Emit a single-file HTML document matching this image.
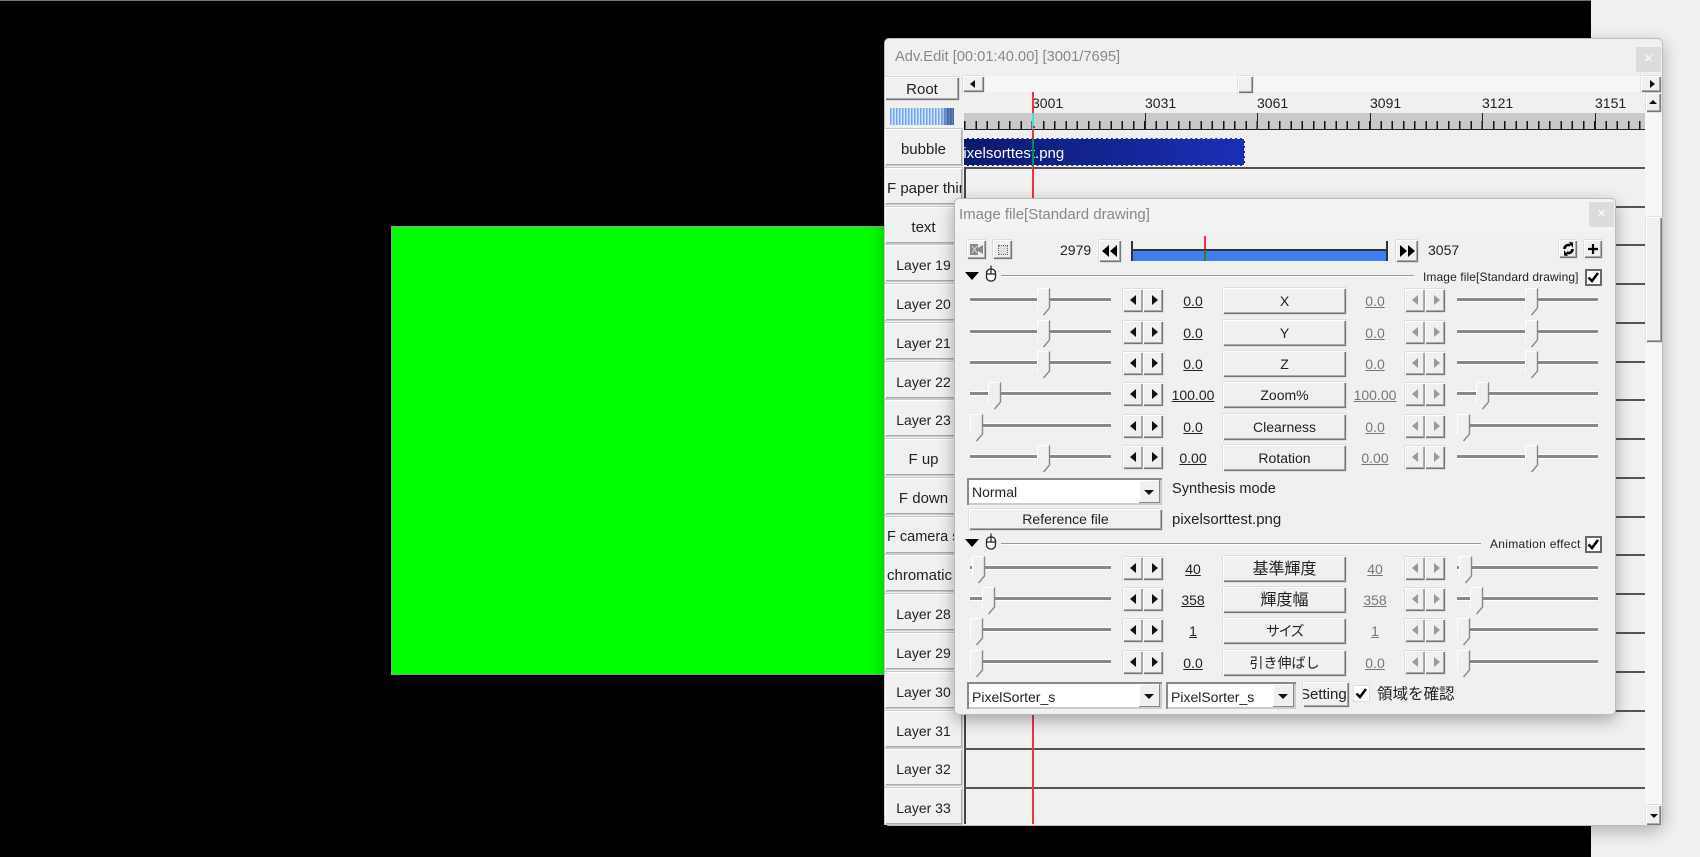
<!DOCTYPE html>
<html><head><meta charset="utf-8"><title>Adv.Edit</title>
<style>
html,body{margin:0;padding:0;background:#000}
#p{position:relative;width:1700px;height:857px;overflow:hidden;background:#000;font:14px "Liberation Sans","Noto Sans CJK JP",sans-serif;color:#222;filter:blur(.3px)}
#p *{box-sizing:border-box}
.abs,#p i,#p b,#p u,#p span,#p svg{position:absolute;display:block}
#p i,#p b,#p u{font-style:normal;font-weight:normal}
.btn,.b,.lb,.a{background:#f0f0f0;box-shadow:inset 1px 1px 0 #fff,inset -1px -1px 0 #777,inset -2px -2px 0 #aaa,0 0 0 .5px #ccc}
.lb{left:885px;width:77px;height:36px;line-height:41px;text-align:center;overflow:hidden;white-space:nowrap;box-shadow:inset 1px 1px 0 #fff,inset -1px -1px 0 #aaa,0 0 0 1px #c8c8c8}
.w{font-size:15px}
.tr{left:964px;width:681px;height:39px;border-top:2px solid #555;border-left:2px solid #444}
.rl{top:102px;left:0;height:16px;line-height:16px;font-size:14px;transform:translateY(-8px)}
.mj{top:113px;width:1.4px;height:16px;background:#222}
.r{left:0;width:1700px;height:30px;position:absolute}
.t{height:3px;top:10px;width:141px;background:#888;box-shadow:0 1px 0 #fff,0 -1px 0 #fff}
.t1{left:970px}.t2{left:1457px}
.h{top:0;width:14px;height:28px}
.a{width:20px;height:23px;top:1px}
.a1{left:1123px}.a2{left:1143px}.a3{left:1405px}.a4{left:1425px}
.a::after{content:"";position:absolute;top:6px;border:5px solid transparent;border-width:5px 6px}
.a1::after,.a3::after{left:1px;border-right-color:#111}
.a2::after,.a4::after{left:9px;border-left-color:#111}
.a3::after{border-right-color:#999}.a4::after{border-left-color:#999}
.v{top:4px;width:60px;text-align:center;line-height:18px;text-decoration:underline}
.v1{left:1163px}.v2{left:1345px;color:#777}
.b{left:1223px;top:0;width:123px;height:26px;line-height:27px;text-align:center;white-space:nowrap}
.j{font-size:16px}
.cb{height:27px;background:#fff;box-shadow:inset 0 0 0 2px #8c8c8c;box-shadow:inset 2px 2px 0 #8a8a8a,inset -2px -2px 0 #ccc}
.dd{width:21px;height:23px;top:2px;background:#f0f0f0;box-shadow:inset -1px -1px 0 #888,inset 1px 1px 0 #fff}
.dd::after{content:"";position:absolute;left:5px;top:10px;border:5px solid transparent;border-bottom:0;border-top:5px solid #111}
.tx{white-space:nowrap;line-height:18px}
.ck{width:17px;height:17px;background:#fff;box-shadow:inset 0 0 0 2px #666}
</style></head><body>
<div id="p">
<svg width="0" height="0" style="position:absolute"><defs>
<g id="h"><polygon points=".5,.5 12.5,.5 12.5,20 6.5,27 .5,21" fill="#f0f0f0"/><polyline points=".5,21 .5,.5 12,.5" fill="none" stroke="#fff"/><polyline points="12.5,.5 12.5,20 6.5,27" fill="none" stroke="#888" stroke-width="1.4"/></g>
<g id="m"><rect x="1.5" y="4" width="9" height="12" rx="4" fill="#fff" stroke="#222" stroke-width="1.3"/><path d="M1.5 9H10.5M6 4V9M6 4V.5" fill="none" stroke="#222" stroke-width="1.2"/></g>
<path id="c" d="M3.5 8.5L7 12L13 4" fill="none" stroke="#000" stroke-width="2.6"/>
</defs></svg>

<!-- top line + right panel -->
<div class="abs" style="position:absolute;left:0;top:0;width:1591px;height:1px;background:#777"></div>
<div style="position:absolute;left:1591px;top:0;width:109px;height:857px;background:#f1f1f1"></div>
<div style="position:absolute;left:391px;top:226px;width:500px;height:449px;background:#0f0;border:1px solid #999"></div>

<!-- main window -->
<div style="position:absolute;left:884px;top:38px;width:779px;height:788px;background:#f0f0f0;border-radius:5px;border:1px solid #bbb;box-shadow:0 5px 18px rgba(0,0,0,.28)"></div>
<div class="tx" style="position:absolute;left:895px;top:48px;color:#888;font-size:14.7px">Adv.Edit [00:01:40.00] [3001/7695]</div>
<div style="position:absolute;left:1636px;top:47px;width:25px;height:25px;background:#dcdcdc;color:#fff;text-align:center;line-height:24px;font-size:15px">×</div>
<div style="position:absolute;left:963px;top:76px;width:678px;height:16px;background:#f7f7f7"></div>
<i class="btn w" style="left:885px;top:77px;width:74px;height:23px;line-height:25px;text-align:center">Root</i>
<i class="btn" style="left:963px;top:76px;width:21px;height:16px"></i>
<span style="left:970px;top:80px;width:0;height:0;border:4px solid transparent;border-right:5px solid #111;border-left:0"></span>
<i class="btn" style="left:1238px;top:76px;width:15px;height:17px"></i>
<i class="btn" style="left:1641px;top:76px;width:20px;height:16px"></i>
<span style="left:1650px;top:80px;width:0;height:0;border:4px solid transparent;border-left:5px solid #111;border-right:0"></span>

<!-- scrollbar -->
<div style="position:absolute;left:1645px;top:93px;width:17px;height:732px;background:#f7f7f7"></div>
<i class="btn" style="left:1646px;top:93px;width:15px;height:19px"></i>
<span style="left:1649px;top:100px;width:0;height:0;border:4px solid transparent;border-top:0;border-bottom:4px solid #111"></span>
<i class="btn" style="left:1646px;top:217px;width:16px;height:125px"></i>
<i class="btn" style="left:1646px;top:805px;width:15px;height:20px"></i>
<span style="left:1650px;top:814px;width:0;height:0;border:4px solid transparent;border-bottom:0;border-top:4px solid #111"></span>

<!-- meter -->
<div style="position:absolute;left:890px;top:108px;width:64px;height:17px;background:linear-gradient(90deg,transparent 0,transparent 80%,rgba(30,60,130,.6) 90%),repeating-linear-gradient(90deg,#6ea6ee 0 1.5px,#d5e3f8 1.5px 3px)"></div>

<!-- ruler -->
<div style="position:absolute;left:964px;top:113px;width:681px;height:17px;background:#c9c9c9;border-bottom:1.5px solid #222"></div>
<div style="position:absolute;left:964px;top:121px;width:681px;height:8px;background:repeating-linear-gradient(90deg,transparent 0 .1px,#111 .1px 1.6px,transparent 1.6px 11.25px)"></div>
<i class="mj" style="left:1032px"></i><i class="mj" style="left:1144.6px"></i><i class="mj" style="left:1257px"></i><i class="mj" style="left:1369.6px"></i><i class="mj" style="left:1482px"></i><i class="mj" style="left:1594.6px"></i>
<i class="rl tx" style="left:1032px">3001</i>
<i class="rl tx" style="left:1145px">3031</i>
<i class="rl tx" style="left:1257px">3061</i>
<i class="rl tx" style="left:1370px">3091</i>
<i class="rl tx" style="left:1482px">3121</i>
<i class="rl tx" style="left:1595px">3151</i>

<!-- labels -->
<i class="lb w" style="top:129px">bubble</i>
<i class="lb w" style="top:168px;text-align:left;padding-left:2px">F paper thin</i>
<i class="lb w" style="top:207px">text</i>
<i class="lb" style="top:245px">Layer 19</i>
<i class="lb" style="top:284px">Layer 20</i>
<i class="lb" style="top:323px">Layer 21</i>
<i class="lb" style="top:362px">Layer 22</i>
<i class="lb" style="top:400px">Layer 23</i>
<i class="lb w" style="top:439px">F up</i>
<i class="lb w" style="top:478px">F down</i>
<i class="lb" style="top:517px;text-align:left;padding-left:2px;font-size:14.5px">F camera s</i>
<i class="lb w" style="top:555px;text-align:left;padding-left:2px">chromatic</i>
<i class="lb" style="top:594px">Layer 28</i>
<i class="lb" style="top:633px">Layer 29</i>
<i class="lb" style="top:672px">Layer 30</i>
<i class="lb" style="top:711px">Layer 31</i>
<i class="lb" style="top:749px">Layer 32</i>
<i class="lb" style="top:788px">Layer 33</i>

<!-- tracks -->
<i class="tr" style="top:167px"></i><i class="tr" style="top:206px"></i><i class="tr" style="top:244px"></i>
<i class="tr" style="top:283px"></i><i class="tr" style="top:322px"></i><i class="tr" style="top:361px"></i>
<i class="tr" style="top:399px"></i><i class="tr" style="top:438px"></i><i class="tr" style="top:477px"></i>
<i class="tr" style="top:516px"></i><i class="tr" style="top:554px"></i><i class="tr" style="top:593px"></i>
<i class="tr" style="top:632px"></i><i class="tr" style="top:671px"></i><i class="tr" style="top:710px"></i>
<i class="tr" style="top:748px"></i><i class="tr" style="top:787px;height:37px"></i>

<!-- object -->
<div style="position:absolute;left:964px;top:138px;width:281px;height:28px;background:linear-gradient(90deg,#0c1a6c,#1a2fb8);border:1.5px dashed #fff;border-left:0;overflow:hidden;color:#fff;font-size:15px;line-height:29px;white-space:nowrap;text-indent:-9px">pixelsorttest.png</div>

<!-- playhead -->
<div style="position:absolute;left:1032px;top:92px;width:1.5px;height:732px;background:#f0343c"></div>
<div style="position:absolute;left:1032px;top:113px;width:1.5px;height:16px;background:#3fe0e8"></div>
<div style="position:absolute;left:1033px;top:126px;width:2px;height:2px;background:#e02020"></div>
<div style="position:absolute;left:1032px;top:138px;width:1.5px;height:28px;background:#0a8a5a"></div>

<!-- dialog -->
<div style="position:absolute;left:954px;top:198px;width:662px;height:517px;background:#f0f0f0;border:1px solid #bbb;border-radius:5px;box-shadow:0 5px 16px rgba(0,0,0,.32)"></div>
<div style="position:absolute;left:955px;top:199px;width:660px;height:33px;background:#f3f3f3;border-radius:5px 5px 0 0"></div>
<div class="tx" style="position:absolute;left:959px;top:206px;color:#888;font-size:15px">Image file[Standard drawing]</div>
<div style="position:absolute;left:1589px;top:202px;width:25px;height:25px;background:#dcdcdc;color:#fff;text-align:center;line-height:24px;font-size:15px">×</div>

<!-- top strip -->
<i class="btn" style="left:967px;top:240px;width:19px;height:19px"></i>
<svg style="left:969px;top:243px" width="15" height="13"><path d="M1 1H9V5L14 2V11L9 8V12H1Z" fill="#888"/><path d="M3 3L8 10M8 3L3 10" stroke="#ddd" stroke-width="1"/></svg>
<i class="btn" style="left:993px;top:240px;width:19px;height:19px"></i>
<div style="position:absolute;left:998px;top:245px;width:10px;height:10px;border:1px dotted #666;background:#ddd"></div>
<i class="tx" style="left:1060px;top:241px">2979</i>
<i class="btn" style="left:1099px;top:240px;width:22px;height:22px"></i>
<svg style="left:1101px;top:244px" width="18" height="14"><path d="M1 7L8 1V13ZM9 7L16 1V13Z" fill="#000"/></svg>
<div style="position:absolute;left:1132px;top:249px;width:255px;height:12px;background:#3f7ff2;border-top:2px solid #333"></div>
<div style="position:absolute;left:1131px;top:241px;width:2px;height:20px;background:#333"></div>
<div style="position:absolute;left:1386px;top:241px;width:2px;height:20px;background:#333"></div>
<div style="position:absolute;left:1204px;top:236px;width:1.5px;height:13px;background:#f0343c"></div>
<div style="position:absolute;left:1204px;top:250px;width:1.5px;height:11px;background:#3a7a20"></div>
<i class="btn" style="left:1396px;top:240px;width:22px;height:22px"></i>
<svg style="left:1399px;top:244px" width="18" height="14"><path d="M1 1L8 7L1 13ZM9 1L16 7L9 13Z" fill="#000"/></svg>
<i class="tx" style="left:1428px;top:241px">3057</i>
<i class="btn" style="left:1559px;top:240px;width:18px;height:18px"></i>
<svg style="left:1562px;top:242px" width="13" height="14"><path d="M2.5 7A4 4 0 0 1 8.5 3.5M10.5 7A4 4 0 0 1 4.5 10.5" fill="none" stroke="#000" stroke-width="2.6"/><path d="M7 0L11 0.5V6ZM6 14L2 13.5V8Z" fill="#000"/></svg>
<i class="btn" style="left:1584px;top:240px;width:18px;height:18px"></i>
<svg style="left:1587px;top:243px" width="12" height="12"><path d="M6 1V11M1 6H11" stroke="#000" stroke-width="2.2"/></svg>

<!-- section 1 -->
<svg style="left:965px;top:272px" width="15" height="9"><path d="M0 0H14L7 8Z" fill="#000"/></svg>
<svg style="left:985px;top:265px" width="12" height="18"><use href="#m"/></svg>
<div style="position:absolute;left:1001px;top:275px;width:413px;height:1px;background:#999;box-shadow:0 1px 0 #fff"></div>
<i class="tx" style="left:1423px;top:268px;font-size:12px;letter-spacing:.1px">Image file[Standard drawing]</i>
<i class="ck" style="left:1585px;top:269px"></i>
<svg style="left:1585px;top:269px" width="17" height="17"><use href="#c"/></svg>

<div class="r" style="top:288px"><i class="t t1"></i><svg class="h" style="left:1037px"><use href="#h"/></svg><i class="a a1"></i><i class="a a2"></i><u class="v v1">0.0</u><b class="b">X</b><u class="v v2">0.0</u><i class="a a3"></i><i class="a a4"></i><i class="t t2"></i><svg class="h" style="left:1525px"><use href="#h"/></svg></div>
<div class="r" style="top:319.5px"><i class="t t1"></i><svg class="h" style="left:1037px"><use href="#h"/></svg><i class="a a1"></i><i class="a a2"></i><u class="v v1">0.0</u><b class="b">Y</b><u class="v v2">0.0</u><i class="a a3"></i><i class="a a4"></i><i class="t t2"></i><svg class="h" style="left:1525px"><use href="#h"/></svg></div>
<div class="r" style="top:351px"><i class="t t1"></i><svg class="h" style="left:1037px"><use href="#h"/></svg><i class="a a1"></i><i class="a a2"></i><u class="v v1">0.0</u><b class="b">Z</b><u class="v v2">0.0</u><i class="a a3"></i><i class="a a4"></i><i class="t t2"></i><svg class="h" style="left:1525px"><use href="#h"/></svg></div>
<div class="r" style="top:382px"><i class="t t1"></i><svg class="h" style="left:988px"><use href="#h"/></svg><i class="a a1"></i><i class="a a2"></i><u class="v v1">100.00</u><b class="b">Zoom%</b><u class="v v2">100.00</u><i class="a a3"></i><i class="a a4"></i><i class="t t2"></i><svg class="h" style="left:1476px"><use href="#h"/></svg></div>
<div class="r" style="top:413.5px"><i class="t t1"></i><svg class="h" style="left:970px"><use href="#h"/></svg><i class="a a1"></i><i class="a a2"></i><u class="v v1">0.0</u><b class="b">Clearness</b><u class="v v2">0.0</u><i class="a a3"></i><i class="a a4"></i><i class="t t2"></i><svg class="h" style="left:1457px"><use href="#h"/></svg></div>
<div class="r" style="top:444.5px"><i class="t t1"></i><svg class="h" style="left:1037px"><use href="#h"/></svg><i class="a a1"></i><i class="a a2"></i><u class="v v1">0.00</u><b class="b">Rotation</b><u class="v v2">0.00</u><i class="a a3"></i><i class="a a4"></i><i class="t t2"></i><svg class="h" style="left:1525px"><use href="#h"/></svg></div>

<!-- synthesis -->
<div class="cb abs" style="position:absolute;left:967px;top:478px;width:195px"><i class="dd" style="left:172px"></i><span class="tx" style="left:5px;top:5px">Normal</span></div>
<i class="tx" style="left:1172px;top:480px;font-size:14.6px">Synthesis mode</i>
<i class="btn" style="left:969px;top:509px;width:193px;height:21px;line-height:21px;text-align:center">Reference file</i>
<i class="tx" style="left:1172px;top:511px;font-size:15px">pixelsorttest.png</i>

<!-- section 2 -->
<svg style="left:965px;top:539px" width="15" height="9"><path d="M0 0H14L7 8Z" fill="#000"/></svg>
<svg style="left:985px;top:533px" width="12" height="18"><use href="#m"/></svg>
<div style="position:absolute;left:1001px;top:543px;width:480px;height:1px;background:#999;box-shadow:0 1px 0 #fff"></div>
<i class="tx" style="left:1490px;top:535px;font-size:12px;letter-spacing:.3px">Animation effect</i>
<i class="ck" style="left:1585px;top:536px"></i>
<svg style="left:1585px;top:536px" width="17" height="17"><use href="#c"/></svg>

<div class="r" style="top:556px"><i class="t t1"></i><svg class="h" style="left:972px"><use href="#h"/></svg><i class="a a1"></i><i class="a a2"></i><u class="v v1">40</u><b class="b j">基準輝度</b><u class="v v2">40</u><i class="a a3"></i><i class="a a4"></i><i class="t t2"></i><svg class="h" style="left:1459px"><use href="#h"/></svg></div>
<div class="r" style="top:587px"><i class="t t1"></i><svg class="h" style="left:982px"><use href="#h"/></svg><i class="a a1"></i><i class="a a2"></i><u class="v v1">358</u><b class="b j">輝度幅</b><u class="v v2">358</u><i class="a a3"></i><i class="a a4"></i><i class="t t2"></i><svg class="h" style="left:1470px"><use href="#h"/></svg></div>
<div class="r" style="top:618px"><i class="t t1"></i><svg class="h" style="left:970px"><use href="#h"/></svg><i class="a a1"></i><i class="a a2"></i><u class="v v1">1</u><b class="b" style="letter-spacing:-1.5px">サイズ</b><u class="v v2">1</u><i class="a a3"></i><i class="a a4"></i><i class="t t2"></i><svg class="h" style="left:1457px"><use href="#h"/></svg></div>
<div class="r" style="top:649.5px"><i class="t t1"></i><svg class="h" style="left:970px"><use href="#h"/></svg><i class="a a1"></i><i class="a a2"></i><u class="v v1">0.0</u><b class="b">引き伸ばし</b><u class="v v2">0.0</u><i class="a a3"></i><i class="a a4"></i><i class="t t2"></i><svg class="h" style="left:1457px"><use href="#h"/></svg></div>

<!-- bottom -->
<div class="cb abs" style="position:absolute;left:967px;top:682px;width:195px"><i class="dd" style="left:172px"></i><span class="tx" style="left:5px;top:6px">PixelSorter_s</span></div>
<div class="cb abs" style="position:absolute;left:1166px;top:682px;width:130px"><i class="dd" style="left:107px"></i><span class="tx" style="left:5px;top:6px">PixelSorter_s</span></div>
<i class="btn" style="left:1303px;top:682px;width:46px;height:25px;overflow:hidden;white-space:nowrap;line-height:26px;text-indent:-3px;font-size:15px">Setting</i>
<i class="ck" style="left:1354px;top:686px;width:15px;height:15px;box-shadow:0 0 0 1px #ddd"></i>
<svg style="left:1353px;top:685px" width="17" height="17"><use href="#c"/></svg>
<i class="tx" style="left:1377px;top:686px;font-size:15.5px">領域を確認</i>
</div>
</body></html>
